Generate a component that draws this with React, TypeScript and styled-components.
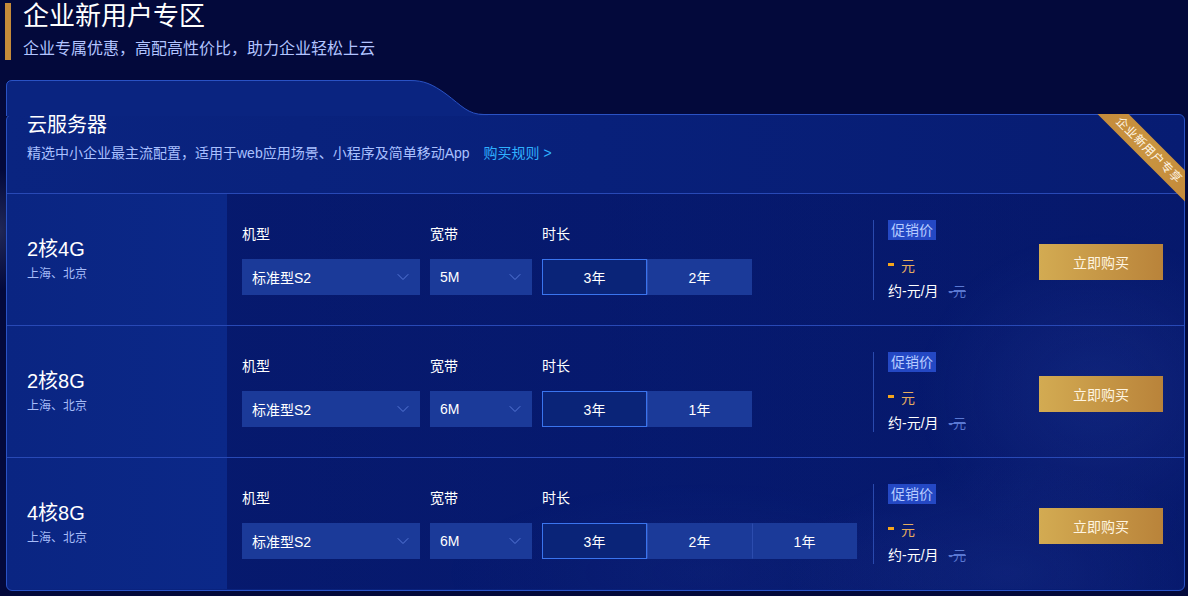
import styled, { createGlobalStyle } from "styled-components";
import { ChevronDown } from "lucide-react";

const GlobalStyle = createGlobalStyle`
  html, body {
    margin: 0;
    padding: 0;
    background: #03093b;
  }
  body {
    font-family: "Liberation Sans", "Noto Sans CJK SC", sans-serif;
    color: #fff;
  }
`;

interface Plan {
  name: string;
  model: string;
  bandwidth: string;
  durations: string[];
}

const plans: Plan[] = [
  { name: "2核4G", model: "标准型S2", bandwidth: "5M", durations: ["3年", "2年"] },
  { name: "2核8G", model: "标准型S2", bandwidth: "6M", durations: ["3年", "1年"] },
  { name: "4核8G", model: "标准型S2", bandwidth: "6M", durations: ["3年", "2年", "1年"] },
];

export default function App() {
  return (
    <Page>
      <GlobalStyle />
      <Heading>
        <h1>企业新用户专区</h1>
        <p>企业专属优惠，高配高性价比，助力企业轻松上云</p>
      </Heading>

      <Card>
        <TabShape width="482" height="36" viewBox="0 0 482 36">
          <path
            d="M0 36 V6 Q0 0.5 6 0.5 H404 C418 0.5 426 4 440 14 C456 26 462 34.5 478 34.5 H482 V36 Z"
            fill="#0a2480"
          />
          <path
            d="M0.5 36 V6 Q0.5 0.5 6 0.5 H404 C418 0.5 426 4 440 14 C456 26 462 34.5 478 34.5 H482"
            fill="none"
            stroke="#2a52c4"
            strokeWidth="1"
          />
        </TabShape>

        <Ribbon>
          <span>企业新用户专享</span>
        </Ribbon>

        <CardHeader>
          <h2>云服务器</h2>
          <p>
            精选中小企业最主流配置，适用于web应用场景、小程序及简单移动App
            <a>购买规则 &gt;</a>
          </p>
        </CardHeader>

        <Rows>
          {plans.map((plan) => (
            <Row key={plan.name}>
              <Spec>
                <h3>{plan.name}</h3>
                <span>上海、北京</span>
              </Spec>
              <Options>
                <Field>
                  <Label>机型</Label>
                  <Select $width={178}>
                    {plan.model}
                    <ChevronDown size={20} strokeWidth={1.2} />
                  </Select>
                </Field>
                <Field>
                  <Label>宽带</Label>
                  <Select $width={102}>
                    {plan.bandwidth}
                    <ChevronDown size={20} strokeWidth={1.2} />
                  </Select>
                </Field>
                <Field>
                  <Label>时长</Label>
                  <Durations>
                    {plan.durations.map((d, i) => (
                      <Duration key={d} $active={i === 0}>
                        {d}
                      </Duration>
                    ))}
                  </Durations>
                </Field>
              </Options>
              <Price>
                <Badge>促销价</Badge>
                <Amount>元</Amount>
                <Monthly>
                  约-元/月<s>-元</s>
                </Monthly>
              </Price>
              <BuyButton>立即购买</BuyButton>
            </Row>
          ))}
        </Rows>
      </Card>
    </Page>
  );
}

const Page = styled.div`
  width: 1188px;
  height: 596px;
  overflow: hidden;
  padding: 1px 3px 0 6px;
  box-sizing: border-box;
  background:
    radial-gradient(ellipse 30px 60px at 0px 230px, rgba(120, 130, 170, 0.25), transparent),
    #03093b;
`;

const Heading = styled.header`
  position: relative;
  padding-left: 18px;
  margin-left: -1px;

  &::before {
    content: "";
    position: absolute;
    left: 0;
    top: 2px;
    width: 6px;
    height: 57px;
    background: #c48a3a;
  }

  h1 {
    margin: 0;
    font-size: 26px;
    line-height: 30px;
    font-weight: 400;
    color: #fff;
  }

  p {
    margin: 7px 0 0;
    font-size: 16px;
    line-height: 22px;
    color: #b2c4ff;
  }
`;

const Card = styled.section`
  position: relative;
  margin-top: 54px;
  height: 477px;
  box-sizing: border-box;
  border: 1px solid #2a52c4;
  border-radius: 6px;
  background: linear-gradient(90deg, #0a2480 0%, #08207a 50%, #071c72 100%);
`;

const TabShape = styled.svg`
  position: absolute;
  left: -1px;
  top: -35px;
  display: block;
`;

const Ribbon = styled.div`
  position: absolute;
  top: -1px;
  right: -1px;
  width: 96px;
  height: 96px;
  overflow: hidden;
  border-top-right-radius: 6px;
  pointer-events: none;

  span {
    position: absolute;
    left: -10px;
    top: 25px;
    width: 140px;
    height: 22px;
    transform: rotate(45deg);
    background: linear-gradient(90deg, #c4893a, #c99440, #c4893a);
    color: #fff6e6;
    font-size: 12px;
    line-height: 22px;
    text-align: center;
    letter-spacing: 0.5px;
  }
`;

const CardHeader = styled.div`
  position: relative;
  box-sizing: border-box;
  height: 78px;
  padding: 0 20px;

  h2 {
    margin: 0;
    font-size: 20px;
    line-height: 20px;
    font-weight: 400;
    color: #fff;
  }

  p {
    margin: 8px 0 0;
    font-size: 14px;
    line-height: 20px;
    color: #a9c0ff;
  }

  a {
    margin-left: 14px;
    color: #2fb1ff;
  }
`;

const Rows = styled.div`
  background:
    radial-gradient(ellipse 180px 160px at 1090px 200px, rgba(70, 100, 210, 0.22), transparent),
    radial-gradient(ellipse 220px 110px at 1000px 380px, rgba(70, 100, 210, 0.18), transparent),
    radial-gradient(ellipse 260px 90px at 700px 380px, rgba(60, 90, 200, 0.12), transparent);
  border-bottom-left-radius: 6px;
  border-bottom-right-radius: 6px;
  overflow: hidden;
`;

const Row = styled.div`
  display: flex;
  align-items: center;
  height: 132px;
  box-sizing: border-box;
  border-top: 1px solid #2849b6;
  background: linear-gradient(90deg, transparent 220px, rgba(3, 14, 90, 0.45) 220px, rgba(3, 14, 90, 0.25) 100%);
`;

const Spec = styled.div`
  flex: 0 0 220px;
  align-self: stretch;
  display: flex;
  flex-direction: column;
  justify-content: center;
  box-sizing: border-box;
  padding: 0 0 2px 20px;
  background: linear-gradient(90deg, #0a2582, #0b2888);

  h3 {
    margin: 0;
    font-size: 20px;
    line-height: 28px;
    font-weight: 400;
    color: #fff;
  }

  span {
    margin-top: 2px;
    font-size: 12px;
    line-height: 18px;
    color: #a6bcf8;
  }
`;

const Options = styled.div`
  flex: 0 0 646px;
  box-sizing: border-box;
  padding-left: 15px;
  display: flex;
  gap: 10px;
`;

const Field = styled.div`
  display: flex;
  flex-direction: column;
  gap: 15px;
`;

const Label = styled.span`
  font-size: 14px;
  line-height: 20px;
  color: #fff;
`;

const Select = styled.div<{ $width: number }>`
  width: ${(p) => p.$width}px;
  height: 36px;
  box-sizing: border-box;
  display: flex;
  align-items: center;
  justify-content: space-between;
  padding: 0 7px 0 10px;
  background: #1b3a99;
  font-size: 14px;
  color: #fff;

  svg {
    color: #5677d8;
  }
`;

const Durations = styled.div`
  display: flex;
`;

const Duration = styled.div<{ $active: boolean }>`
  width: 105px;
  height: 36px;
  box-sizing: border-box;
  display: flex;
  align-items: center;
  justify-content: center;
  font-size: 14px;
  color: #fff;
  background: ${(p) => (p.$active ? "#0a2478" : "#1b3a99")};
  border: 1px solid ${(p) => (p.$active ? "#3a74ee" : "transparent")};

  & + & {
    border-left: 1px solid ${(p) => (p.$active ? "#3a74ee" : "#2c4cae")};
  }
`;

const Price = styled.div`
  flex: 1;
  align-self: center;
  height: 80px;
  box-sizing: border-box;
  border-left: 1px solid #2a4aae;
  padding-left: 14px;
  display: flex;
  flex-direction: column;
  align-items: flex-start;
`;

const Badge = styled.span`
  height: 20px;
  padding: 0 3px;
  font-size: 14px;
  line-height: 20px;
  background: #2448c4;
  color: #b7ccff;
`;

const Amount = styled.div`
  margin-top: 16px;
  font-size: 14px;
  line-height: 20px;
  color: #e6ad5e;
  display: flex;
  align-items: center;

  &::before {
    content: "";
    width: 6px;
    height: 3px;
    margin: 0 7px 3px 0;
    background: #f5a51c;
  }
`;

const Monthly = styled.div`
  margin-top: 5px;
  font-size: 14px;
  line-height: 20px;
  color: #fff;

  s {
    margin-left: 10px;
    font-size: 13px;
    color: #5a78d2;
  }
`;

const BuyButton = styled.button`
  flex: 0 0 124px;
  height: 36px;
  margin: 4px 21px 0 0;
  border: none;
  padding: 0;
  background: linear-gradient(90deg, #d3ab52, #b9833a);
  color: #fff5e0;
  font-family: inherit;
  font-size: 14px;
  cursor: pointer;
`;
